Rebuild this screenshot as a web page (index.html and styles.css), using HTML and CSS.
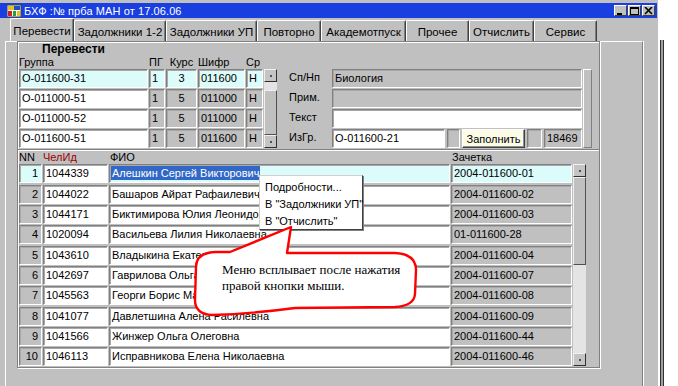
FILE: index.html
```html
<!DOCTYPE html>
<html lang="ru">
<head>
    <meta charset="UTF-8">
    <title>БХФ :№ прба МАН от 17.06.06</title>
    <link rel="stylesheet" href="styles.css">
</head>
<body>
<div class="screen">
    <div class="window">
        <div class="titlebar">
            <svg class="app-icon" width="15" height="14" viewBox="0 0 15 14">
                <rect x="0" y="1" width="14" height="12" fill="#f8f8f0" stroke="#404040"/>
                <rect x="1" y="2" width="6" height="4" fill="#e8c020"/>
                <rect x="7" y="2" width="6" height="4" fill="#2050c0"/>
                <rect x="1" y="7" width="4" height="5" fill="#d02020"/>
                <rect x="6" y="7" width="3" height="5" fill="#20a040"/>
                <rect x="10" y="7" width="3" height="5" fill="#e8c020"/>
            </svg>
            <span class="title">БХФ :№ прба МАН от 17.06.06</span>
            <div class="title-buttons">
                <span class="tb-btn"><svg width="9" height="8" viewBox="0 0 9 8"><rect x="1" y="6" width="5" height="2" fill="#000"/></svg></span>
                <span class="tb-btn"><svg width="9" height="8" viewBox="0 0 9 8"><rect x="0.5" y="0.5" width="8" height="7" fill="none" stroke="#000"/><rect x="0" y="0" width="9" height="2" fill="#000"/></svg></span>
                <span class="tb-btn"><svg width="9" height="8" viewBox="0 0 9 8"><path d="M1 0 L8 7 M8 0 L1 7" stroke="#000" stroke-width="1.6"/></svg></span>
            </div>
        </div>

        <div class="tabs">
            <div class="tab active">Перевести</div>
            <div class="tab">Задолжники 1-2</div>
            <div class="tab">Задолжники УП</div>
            <div class="tab">Повторно</div>
            <div class="tab">Академотпуск</div>
            <div class="tab">Прочее</div>
            <div class="tab">Отчислить</div>
            <div class="tab">Сервис</div>
        </div>

        <div class="page">
            <div class="frame">
                <div class="frame-head">Перевести</div>

                <!-- группы + карточка -->
                <div class="upper">
                    <div class="lbl">Группа</div>
                    <div class="lbl">ПГ</div>
                    <div class="lbl center">Курс</div>
                    <div class="lbl">Шифр</div>
                    <div class="lbl">Ср</div>
                    <div></div><div></div><div></div><div></div><div></div>

                    <div class="cell cur">О-011600-31</div>
                    <div class="cell cur">1</div>
                    <div class="cell cur center">3</div>
                    <div class="cell cur">011600</div>
                    <div class="cell cur">Н</div>
                    <div class="scroll up-scroll">
                        <div class="sb-btn"><i></i></div>
                        <div class="sb-track short"></div>
                        <div class="sb-thumb"></div>
                        <div class="sb-btn"><i></i></div>
                    </div>
                    <div class="gap-col"></div>
                    <div class="form-lbl">Сп/Нп</div>
                    <div class="cell ro">Биология</div>
                    <div class="strip"></div>

                    <div class="cell">О-011000-51</div>
                    <div class="cell ro">1</div>
                    <div class="cell ro center">5</div>
                    <div class="cell ro">011000</div>
                    <div class="cell ro">Н</div>
                    <div class="gap-col"></div>
                    <div class="form-lbl">Прим.</div>
                    <div class="cell ro"></div>

                    <div class="cell">О-011000-52</div>
                    <div class="cell ro">1</div>
                    <div class="cell ro center">5</div>
                    <div class="cell ro">011000</div>
                    <div class="cell ro">Н</div>
                    <div class="gap-col"></div>
                    <div class="form-lbl">Текст</div>
                    <div class="cell"></div>

                    <div class="cell">О-011600-51</div>
                    <div class="cell ro">1</div>
                    <div class="cell ro center">5</div>
                    <div class="cell ro">011600</div>
                    <div class="cell ro">Н</div>
                    <div class="gap-col"></div>
                    <div class="form-lbl">ИзГр.</div>
                    <div class="fill-row">
                        <div class="cell from-group">О-011600-21</div>
                        <div class="cell ro small-box"></div>
                        <button class="btn-fill">Заполнить</button>
                        <div class="cell ro small-box2"></div>
                        <div class="cell ro count">18469</div>
                    </div>
                </div>

                <div class="separator"></div>

                <!-- список студентов -->
                <div class="lower">
                    <div class="lbl">NN</div>
                    <div class="lbl red">ЧелИд</div>
                    <div class="lbl indent">ФИО</div>
                    <div class="lbl indent">Зачетка</div>
                    <div></div>

                    <div class="cell cur num">1</div>
                    <div class="cell">1044339</div>
                    <div class="cell cur"><span class="sel">Алешкин Сергей Викторович</span></div>
                    <div class="cell cur">2004-011600-01</div>
                    <div class="scroll low-scroll">
                        <div class="sb-btn"><i></i></div>
                        <div class="sb-thumb tall"></div>
                        <div class="sb-track"></div>
                        <div class="sb-btn"><i></i></div>
                    </div>

                    <div class="cell ro num">2</div>
                    <div class="cell">1044022</div>
                    <div class="cell">Башаров Айрат Рафаилевич</div>
                    <div class="cell ro">2004-011600-02</div>

                    <div class="cell ro num">3</div>
                    <div class="cell">1044171</div>
                    <div class="cell">Биктимирова Юлия Леонидовна</div>
                    <div class="cell ro">2004-011600-03</div>

                    <div class="cell ro num">4</div>
                    <div class="cell">1020094</div>
                    <div class="cell">Васильева Лилия Николаевна</div>
                    <div class="cell ro">01-011600-28</div>

                    <div class="cell ro num">5</div>
                    <div class="cell">1043610</div>
                    <div class="cell">Владыкина Екатерина</div>
                    <div class="cell ro">2004-011600-04</div>

                    <div class="cell ro num">6</div>
                    <div class="cell">1042697</div>
                    <div class="cell">Гаврилова Ольга</div>
                    <div class="cell ro">2004-011600-07</div>

                    <div class="cell ro num">7</div>
                    <div class="cell">1045563</div>
                    <div class="cell">Георги Борис Ма</div>
                    <div class="cell ro">2004-011600-08</div>

                    <div class="cell ro num">8</div>
                    <div class="cell">1041077</div>
                    <div class="cell">Давлетшина Алена Расилевна</div>
                    <div class="cell ro">2004-011600-09</div>

                    <div class="cell ro num">9</div>
                    <div class="cell">1041566</div>
                    <div class="cell">Жинжер Ольга Олеговна</div>
                    <div class="cell ro">2004-011600-44</div>

                    <div class="cell ro num">10</div>
                    <div class="cell">1046113</div>
                    <div class="cell">Исправникова Елена Николаевна</div>
                    <div class="cell ro">2004-011600-46</div>
                </div>
            </div>
        </div>
    </div>
    <div class="edge"></div>

    <!-- контекстное меню -->
    <div class="popup-menu">
        <div class="menu-item">Подробности...</div>
        <div class="menu-item">В "Задолжники УП"</div>
        <div class="menu-item">В "Отчислить"</div>
    </div>

    <!-- выноска -->
    <div class="callout">
        <svg class="callout-shape" width="236" height="100" viewBox="0 0 236 100">
            <path d="M40 30 L101 5 L97 31 L205 31 Q226 32 226 48 L225 72 Q224 84 205 85 L105 86 Q60 92 22 93 Q5 92 5 78 L6 45 Q6 31 25 30 Z"
                  fill="#fff" stroke="#f00" stroke-width="2.4" stroke-linejoin="round"/>
        </svg>
        <p class="callout-text">Меню всплывает после нажатия<br>правой кнопки мыши.</p>
    </div>
</div>
</body>
</html>
```

FILE: styles.css
```css
body {
    margin: 0;
    background: #fff;
    font-family: "Liberation Sans", Arial, sans-serif;
    font-size: 11px;
    color: #000;
}
.screen {
    position: relative;
    display: flex;
    width: 678px;
    height: 386px;
    overflow: hidden;
}
.window {
    width: 658px;
    height: 386px;
    box-sizing: border-box;
    padding-top: 3px;
    background: #c0c0c0;
    display: flex;
    flex-direction: column;
    flex-shrink: 0;
}
.edge {
    width: 2px;
    margin: 40px 0 0 2px;
    border-left: 1px solid #303030;
    border-right: 1px solid #303030;
    background: #a0a0a0;
}

/* заголовок окна */
.titlebar {
    height: 15px;
    margin-right: 1px;
    background: #1a3fe0;
    color: #fff;
    display: flex;
    align-items: center;
}
.app-icon {
    margin-left: 7px;
    margin-right: 2px;
}
.title {
    font-size: 11px;
    letter-spacing: 0.1px;
}
.title-buttons {
    margin-left: auto;
    margin-right: 2px;
    display: flex;
    gap: 1px;
}
.tb-btn {
    width: 13px;
    height: 11px;
    box-sizing: border-box;
    background: #c0c0c0;
    border: 1px solid;
    border-color: #fff #404040 #404040 #fff;
    display: flex;
    align-items: center;
    justify-content: center;
}

/* вкладки */
.tabs {
    height: 23px;
    display: flex;
    align-items: flex-end;
    padding-left: 10px;
}
.tab {
    height: 21px;
    box-sizing: border-box;
    border: 1px solid;
    border-color: #fff #404040 transparent #fff;
    border-bottom: none;
    border-radius: 2px 2px 0 0;
    box-shadow: inset -1px 0 0 #808080;
    display: flex;
    align-items: center;
    justify-content: center;
    font-size: 11.5px;
    padding-top: 1px;
}
.tab.active { height: 23px; }
.tab:nth-child(1) { width: 64px; }
.tab:nth-child(2) { width: 92px; }
.tab:nth-child(3) { width: 91px; }
.tab:nth-child(4) { width: 64px; }
.tab:nth-child(5) { width: 85px; }
.tab:nth-child(6) { width: 63px; }
.tab:nth-child(7) { width: 65px; }
.tab:nth-child(8) { width: 63px; }

/* страница вкладки */
.page {
    flex: 1;
    width: 638px;
    margin-left: 5px;
    box-sizing: border-box;
    border-top: 1px solid #fff;
    border-left: 1px solid #fff;
    border-right: 1px solid #808080;
    box-shadow: 1px 0 0 #fff;
}
.frame {
    width: 583px;
    height: 327px;
    margin: -1px 0 0 11px;
    box-sizing: border-box;
    border: 1px solid #808080;
    box-shadow: inset 1px 1px 0 #fff, 1px 1px 0 #fff;
    padding-left: 1px;
}
.frame-head {
    height: 14px;
    line-height: 14px;
    padding-left: 23px;
    font-size: 12px;
    font-weight: bold;
}

.upper {
    display: grid;
    grid-template-columns: 129px 16px 31px 47px 17px 13px 9px 43px 250px 9px;
    grid-template-rows: 12px repeat(4, 19px);
    column-gap: 1px;
    row-gap: 1px;
}
.lower {
    display: grid;
    grid-template-columns: 23px 65px 341px 121px 13px;
    grid-template-rows: 12px repeat(10, 19px);
    column-gap: 1px;
    row-gap: 1.33px;
}
.lbl {
    line-height: 12px;
    white-space: nowrap;
}
.lbl.center { text-align: center; }
.lbl.indent { padding-left: 1px; }
.lbl.red { color: #a00000; }

.separator {
    height: 0;
    margin: 1px 0 0 -1px;
    border-top: 1px solid #808080;
    border-bottom: 1px solid #fff;
}

/* поля */
.cell {
    box-sizing: border-box;
    border: 1px solid;
    border-color: #808080 #fff #fff #808080;
    box-shadow: inset 1px 1px 0 #a8a8a8;
    background: #fff;
    line-height: 17px;
    padding-left: 2px;
    white-space: nowrap;
    overflow: hidden;
}
.cell.ro { background: #c0c0c0; }
.cell.cur { background: #dcfbfb; }
.cell.center { text-align: center; padding-left: 0; }
.cell.num { text-align: right; padding-right: 3px; }
.sel {
    background: #3167c6;
    color: #fff;
    margin-left: -1px;
    padding: 1px 1px 1px 1px;
}

.form-lbl {
    grid-column: 8;
    line-height: 17px;
    padding-left: 1px;
}
.gap-col { grid-column: 7; }
.strip {
    grid-column: 10;
    grid-row: 2 / 6;
    box-sizing: border-box;
    border: 1px solid;
    border-color: #fff #808080 #808080 #fff;
}
.fill-row {
    display: flex;
    gap: 2px;
}
.from-group { width: 113px; }
.small-box { width: 13px; }
.small-box2 { width: 15px; }
.count { width: 38px; }
.btn-fill {
    width: 63px;
    height: 19px;
    padding: 0;
    font-family: "Liberation Sans", Arial, sans-serif;
    font-size: 11px;
    background: #fcfce6;
    border: 1px solid;
    border-color: #fff #404040 #404040 #fff;
    box-shadow: inset -1px -1px 0 #909090;
}

/* полосы прокрутки */
.scroll {
    display: flex;
    flex-direction: column;
}
.up-scroll {
    grid-column: 6;
    grid-row: 2 / 6;
}
.low-scroll {
    grid-column: 5;
    grid-row: 2 / 12;
}
.sb-btn {
    height: 13px;
    flex-shrink: 0;
    box-sizing: border-box;
    background: #c4c4c4;
    border: 1px solid;
    border-color: #f0f0f0 #303030 #303030 #f0f0f0;
    display: flex;
    align-items: center;
    justify-content: center;
}
.sb-btn i {
    width: 2px;
    height: 2px;
    background: #505050;
}
.sb-track {
    flex: 1;
    background: #e4e4e4;
}
.sb-track.short { flex: 0 0 8px; }
.sb-thumb {
    flex: 1;
    box-sizing: border-box;
    background: #c0c0c0;
    border: 1px solid;
    border-color: #f0f0f0 #505050 #505050 #f0f0f0;
}
.sb-thumb.tall { flex: 0 0 88px; }

/* контекстное меню */
.popup-menu {
    position: absolute;
    left: 259px;
    top: 175px;
    width: 104px;
    height: 55px;
    box-sizing: border-box;
    background: #fff;
    border: 1px solid;
    border-color: #d0d0d0 #404040 #404040 #d0d0d0;
    box-shadow: 1px 1px 0 #808080;
    padding-top: 3px;
}
.menu-item {
    line-height: 17px;
    padding-left: 5px;
    white-space: nowrap;
}

/* выноска */
.callout {
    position: absolute;
    left: 190px;
    top: 222px;
    width: 236px;
    height: 100px;
}
.callout-shape {
    position: absolute;
    left: 0;
    top: 0;
}
.callout-text {
    position: relative;
    margin: 0;
    padding: 40px 0 0 32px;
    font-family: "Liberation Serif", "Times New Roman", serif;
    font-size: 13px;
    line-height: 16px;
}
```
